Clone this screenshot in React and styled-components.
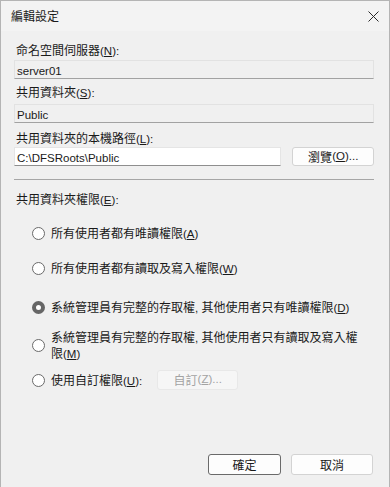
import React from "react";
import styled, { createGlobalStyle } from "styled-components";

const Global = createGlobalStyle`
  html, body { margin: 0; padding: 0; background: #f0f0f0; }
  * { box-sizing: border-box; }
  body { font-family: "Noto Sans CJK TC", "Noto Sans", sans-serif; font-size: 12px; color: #1a1a1a; }
`;

const Window = styled.div`
  width: 390px;
  height: 487px;
  display: flex;
  flex-direction: column;
  border: 1px solid #b4b4b4;
  border-bottom: none;
  background: #f0f0f0;
`;

const TitleBar = styled.div`
  height: 30px;
  flex: none;
  display: flex;
  align-items: center;
  justify-content: space-between;
  padding: 0 10px 0 10px;
  background: #f3f3f3;
`;

const Title = styled.span`
  font-size: 12px;
  line-height: 16px;
  color: #1a1a1a;
`;

const Body = styled.div`
  flex: 1;
  display: flex;
  flex-direction: column;
  padding: 11px 15px 12px 13px;
`;

const Label = styled.div`
  height: 16px;
  line-height: 16px;
  padding-left: 2px;
  margin-top: ${(p) => p.$mt || 0}px;
`;

const Latin = styled.span`
  font-family: "Liberation Sans", Arial, sans-serif;
  font-size: 11.5px;
  line-height: 1;
`;

const ReadOnlyBox = styled.div`
  height: 19px;
  margin-top: ${(p) => p.$mt || 0}px;
  border: 1px solid #e2e2e2;
  border-bottom-color: #a2a2a2;
  background: #f0f0f0;
  padding-left: 2px;
  line-height: 17px;
  color: #1a1a1a;
`;

const PathRow = styled.div`
  display: flex;
  align-items: center;
  gap: 11px;
  margin-top: 1px;
`;

const TextInput = styled.div`
  width: 269px;
  height: 19px;
  border: 1px solid #e5e5e5;
  border-bottom-color: #8e8e8e;
  background: #ffffff;
  padding-left: 2px;
  line-height: 17px;
`;

const Button = styled.div`
  width: ${(p) => p.$w}px;
  height: ${(p) => p.$h || 19}px;
  margin-left: ${(p) => p.$ml || 0}px;
  border: 1px solid ${(p) => (p.$default ? "#6a6a6a" : p.$disabled ? "#e8e8e8" : "#d3d3d3")};
  border-radius: 3px;
  background: ${(p) => (p.$disabled ? "#f6f6f6" : "#fdfdfd")};
  color: ${(p) => (p.$disabled ? "#a3a3a3" : "#1a1a1a")};
  display: flex;
  align-items: center;
  justify-content: center;
  line-height: 16px;
`;

const Separator = styled.div`
  height: 1px;
  background: #a6a6a6;
  margin-top: 13px;
`;

const RadioList = styled.div`
  display: flex;
  flex-direction: column;
  padding-left: 18px;
`;

const RadioRow = styled.div`
  display: flex;
  align-items: center;
  gap: 6px;
  margin-top: ${(p) => p.$mt}px;
`;

const Circle = styled.span`
  flex: none;
  width: 13px;
  height: 13px;
  border-radius: 50%;
  background: #ffffff;
  border: ${(p) => (p.$checked ? "4px solid #666666" : "1px solid #6a6a6a")};
`;

const RadioText = styled.span`
  line-height: 16px;
  width: ${(p) => (p.$wrap ? "314px" : "auto")};
`;

const Footer = styled.div`
  margin-top: auto;
  display: flex;
  justify-content: flex-end;
  gap: 10px;
  padding-right: 1px;
`;

const CloseIcon = () => (
  <svg width="11" height="11" viewBox="0 0 11 11" style={{ display: "block" }}>
    <path d="M0.5 0.5L10.5 10.5M10.5 0.5L0.5 10.5" stroke="#2a2a2a" strokeWidth="1" />
  </svg>
);

const Key = ({ k }) => (
  <Latin>
    (<u>{k}</u>)
  </Latin>
);

const Radio = ({ checked, mt, wrap, children }) => (
  <RadioRow $mt={mt}>
    <Circle $checked={checked} />
    <RadioText $wrap={wrap}>{children}</RadioText>
  </RadioRow>
);

export default function App() {
  return (
    <>
      <Global />
      <Window>
        <TitleBar>
          <Title>編輯設定</Title>
          <CloseIcon />
        </TitleBar>
        <Body>
          <Label>命名空間伺服器<Key k="N" /><Latin>:</Latin></Label>
          <ReadOnlyBox $mt={2}><Latin>server01</Latin></ReadOnlyBox>
          <Label $mt={5}>共用資料夾<Key k="S" /><Latin>:</Latin></Label>
          <ReadOnlyBox $mt={4}><Latin>Public</Latin></ReadOnlyBox>
          <Label $mt={7}>共用資料夾的本機路徑<Key k="L" /><Latin>:</Latin></Label>
          <PathRow>
            <TextInput><Latin>C:\DFSRoots\Public</Latin></TextInput>
            <Button $w={82}>瀏覽<Key k="O" /><Latin>...</Latin></Button>
          </PathRow>
          <Separator />
          <Label $mt={11}>共用資料夾權限<Key k="E" /><Latin>:</Latin></Label>
          <RadioList>
            <Radio mt={18}>所有使用者都有唯讀權限<Key k="A" /></Radio>
            <Radio mt={19}>所有使用者都有讀取及寫入權限<Key k="W" /></Radio>
            <Radio mt={23} checked>系統管理員有完整的存取權<Latin>, </Latin>其他使用者只有唯讀權限<Key k="D" /></Radio>
            <Radio mt={14} wrap>系統管理員有完整的存取權<Latin>, </Latin>其他使用者只有讀取及寫入權限<Key k="M" /></Radio>
            <RadioRow $mt={9}>
              <Circle />
              <RadioText>使用自訂權限<Key k="U" /><Latin>:</Latin></RadioText>
              <Button $w={81} $h={20} $ml={9} $disabled>自訂<Key k="Z" /><Latin>...</Latin></Button>
            </RadioRow>
          </RadioList>
          <Footer>
            <Button $w={73} $h={21} $default>確定</Button>
            <Button $w={82} $h={21}>取消</Button>
          </Footer>
        </Body>
      </Window>
    </>
  );
}
